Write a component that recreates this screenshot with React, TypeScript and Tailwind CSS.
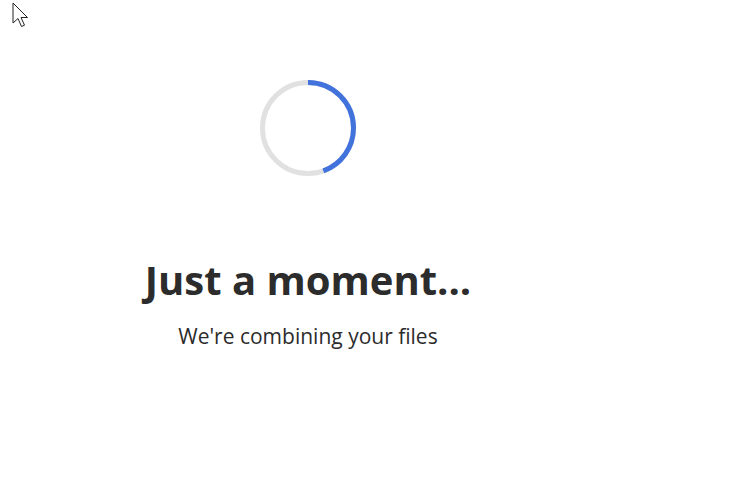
export default function App() {
  const r = 45.5;
  const c = 2 * Math.PI * r;
  const frac = 160 / 360;
  return (
    <div className="relative w-[731px] h-[486px] bg-white overflow-hidden" style={{ fontFamily: '"Open Sans", sans-serif' }}>
      <svg className="absolute left-[12px] top-[2px]" width="20" height="28" viewBox="0 0 20 28">
        <path d="M1 1 L1 21 L6 16.5 L9.5 24.5 L12.5 23.2 L9 15.5 L15.5 15.5 Z" fill="white" stroke="#222" strokeWidth="1" strokeLinejoin="round" />
      </svg>
      <div className="w-[616px] flex flex-col items-center pt-[80px]">
        <svg width="96" height="96" viewBox="0 0 96 96">
          <circle cx="48" cy="48" r={r} fill="none" stroke="#e1e1e1" strokeWidth="5" />
          <circle cx="48" cy="48" r={r} fill="none" stroke="#4272dc" strokeWidth="5" strokeDasharray={`${c * frac} ${c}`} transform="rotate(-90 48 48)" />
        </svg>
        <h1 className="mt-[80px] text-[40px] leading-[48px] font-bold text-[#2c2c2c]">Just a moment...</h1>
        <p className="mt-[18px] text-[21px] leading-[28px] text-[#2c2c2c]">We're combining your files</p>
      </div>
    </div>
  );
}
